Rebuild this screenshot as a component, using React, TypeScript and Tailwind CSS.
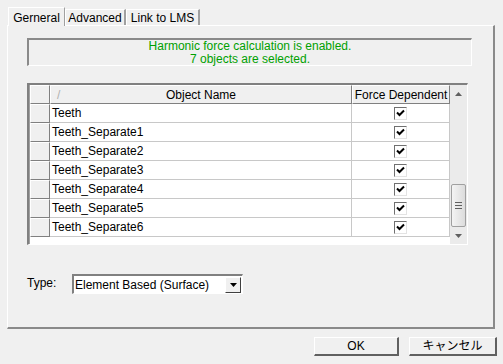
import React from "react";

const rows = [
  "Teeth",
  "Teeth_Separate1",
  "Teeth_Separate2",
  "Teeth_Separate3",
  "Teeth_Separate4",
  "Teeth_Separate5",
  "Teeth_Separate6",
];

const CheckBox = () => (
  <div className="w-[13px] h-[13px] bg-white border-t border-l border-[#707070] border-r border-b border-r-[#e3e3e3] border-b-[#e3e3e3] flex items-center justify-center">
    <svg width="9" height="8" viewBox="0 0 9 8">
      <path d="M1 3.5 L3.5 6 L8 1.5" stroke="#000" strokeWidth="2" fill="none" />
    </svg>
  </div>
);

const Tab = ({ label, active, w }: { label: string; active?: boolean; w: string }) => (
  <div
    className={
      (active
        ? "h-[19px] bg-[#f0f0f0] border-t border-l border-white border-r border-r-[#a0a0a0] -mb-px z-10 pt-[3px] "
        : "h-[16px] bg-[#f0f0f0] border-t border-l border-white border-r-2 border-r-[#a0a0a0] pt-[1px] ") +
      "flex justify-center items-start text-black " +
      w
    }
  >
    {label}
  </div>
);

export default function App() {
  return (
    <div
      className="w-[503px] h-[364px] bg-[#f0f0f0] text-[12px] leading-[14px] text-black overflow-hidden"
      style={{ fontFamily: '"Liberation Sans", "Noto Sans CJK JP", sans-serif' }}
    >
      <div className="pt-[7px] pl-[7px] pr-[8px]">
        {/* tabs */}
        <div className="flex items-end h-[18px] pl-px relative">
          <Tab label="Gerneral" active w="w-[57px]" />
          <Tab label="Advanced" w="w-[61px]" />
          <Tab label="Link to LMS" w="w-[74px]" />
        </div>

        {/* tab panel */}
        <div className="h-[304px] border-t border-l border-white border-r-2 border-b-2 border-r-[#8a8a8a] border-b-[#8a8a8a] pl-[19px] pt-[12px]">
          <div className="w-[445px] h-[28px] border-t-2 border-l-2 border-[#8a8a8a] border-r border-b border-r-white border-b-white flex flex-col items-center justify-center text-[#00a000] leading-[13px]">
            <div>Harmonic force calculation is enabled.</div>
            <div>7 objects are selected.</div>
          </div>

          {/* grid */}
          <div className="mt-[17px] w-[441px] h-[162px] border-t-2 border-l-2 border-[#808080] border-r border-b border-r-white border-b-white flex">
            <div className="flex-1 bg-white border-l border-[#a0a0a0]">
              <div className="flex h-[19px] bg-[#f0f0f0]">
                <div className="w-[20px] border-t border-l border-white border-r border-b border-r-[#808080] border-b-[#808080]" />
                <div className="w-[302px] relative border-t border-l border-white border-r border-b border-r-[#808080] border-b-[#808080] flex items-center justify-center">
                  <span className="absolute left-[6px] text-[#b0b0b0]">/</span>
                  <span>Object Name</span>
                </div>
                <div className="flex-1 border-t border-l border-white border-r border-b border-r-[#808080] border-b-[#808080] flex items-center justify-center">
                  Force Dependent
                </div>
              </div>
              {rows.map((name) => (
                <div key={name} className="flex h-[19px]">
                  <div className="w-[20px] border-t border-l border-white border-r border-b border-r-[#808080] border-b-[#808080] bg-[#f0f0f0]" />
                  <div className="w-[302px] bg-white border-r border-b border-[#c8c8c8] pl-[2px] flex items-center">
                    {name}
                  </div>
                  <div className="flex-1 bg-white border-r border-b border-[#c8c8c8] flex items-center justify-center">
                    <CheckBox />
                  </div>
                </div>
              ))}
            </div>
            {/* scrollbar */}
            <div className="w-[17px] bg-[#ebebeb] flex flex-col items-center">
              <div className="h-[18px] w-full flex items-center justify-center">
                <svg width="7" height="4" viewBox="0 0 7 4">
                  <path d="M0 4 L3.5 0 L7 4 Z" fill="#606060" />
                </svg>
              </div>
              <div className="flex-1" />
              <div className="w-[15px] h-[43px] rounded-[2px] border border-[#a0a0a0] bg-gradient-to-r from-[#f4f4f4] to-[#dcdcdc] flex flex-col items-center justify-center gap-[2px]">
                <div className="w-[7px] h-px bg-[#606060]" />
                <div className="w-[7px] h-px bg-[#606060]" />
                <div className="w-[7px] h-px bg-[#606060]" />
              </div>
              <div className="h-[17px] w-full flex items-center justify-center">
                <svg width="7" height="4" viewBox="0 0 7 4">
                  <path d="M0 0 L3.5 4 L7 0 Z" fill="#606060" />
                </svg>
              </div>
            </div>
          </div>

          {/* type */}
          <div className="mt-[29px] flex items-start">
            <div className="w-[45px] pt-[2px]">Type:</div>
            <div className="w-[171px] h-[20px] bg-white border-t-2 border-l-2 border-[#808080] border-r border-b border-r-white border-b-white flex items-center">
              <div className="flex-1 pl-[1px]">Element Based (Surface)</div>
              <div className="w-[16px] h-[16px] mr-px bg-[#f0f0f0] border-t border-l border-white border-r border-b border-r-[#404040] border-b-[#404040] flex items-center justify-center">
                <svg width="7" height="4" viewBox="0 0 7 4">
                  <path d="M0 0 L3.5 4 L7 0 Z" fill="#000" />
                </svg>
              </div>
            </div>
          </div>
        </div>

        {/* buttons */}
        <div className="flex justify-end gap-[10px] mt-[8px] -mr-[2px]">
          <div className="w-[85px] h-[19px] bg-[#f0f0f0] border-t border-l border-white border-r-2 border-b-2 border-r-[#606060] border-b-[#606060] flex items-center justify-center">
            OK
          </div>
          <div className="w-[88px] h-[19px] bg-[#f0f0f0] border-t border-l border-white border-r-2 border-b-2 border-r-[#606060] border-b-[#606060] flex items-center justify-center">
            キャンセル
          </div>
        </div>
      </div>
    </div>
  );
}
